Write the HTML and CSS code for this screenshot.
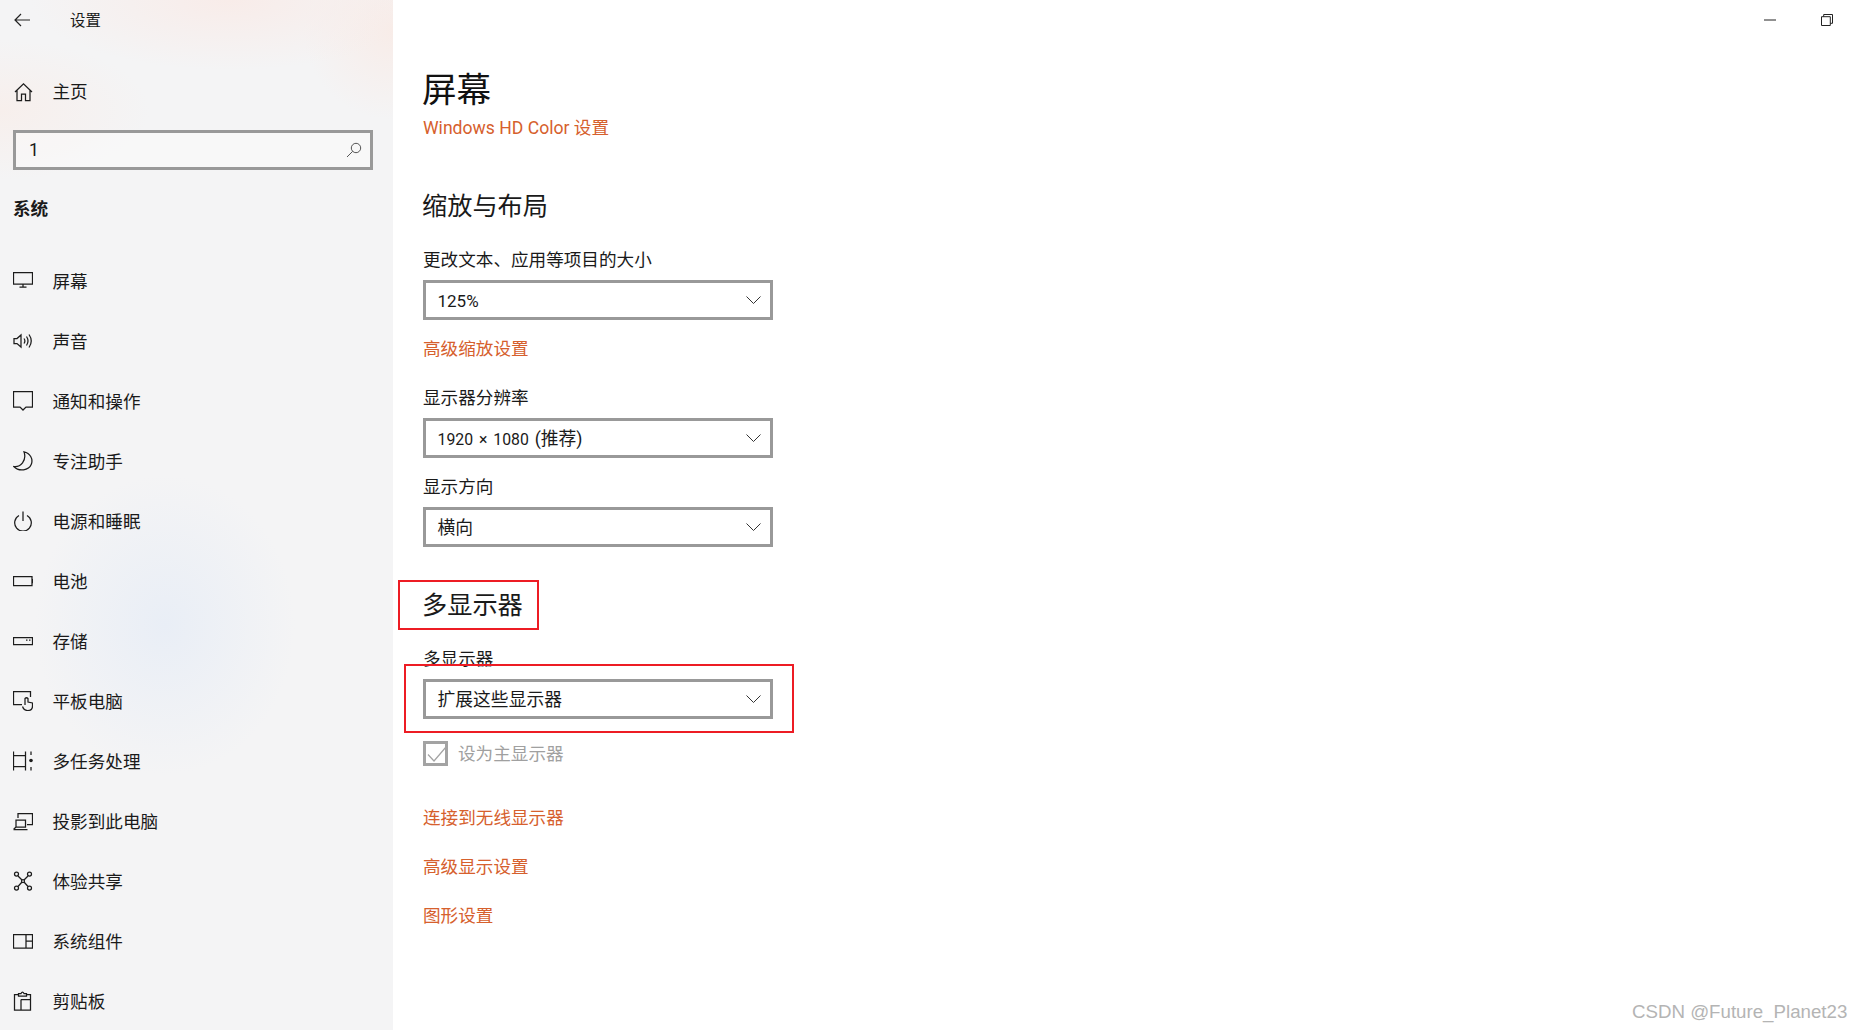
FILE: index.html
```html
<!DOCTYPE html>
<html lang="zh-CN">
<head>
<meta charset="utf-8">
<title>设置</title>
<link rel="stylesheet" href="styles.css">
</head>
<body>
<div class="app">
  <aside class="side">
    <div class="titlebar">
      <svg class="back" viewBox="0 0 16 14"><path d="M7 1 1 7l6 6M1 7h15"/></svg>
      <span class="app-name">设置</span>
    </div>
    <div class="row home">
      <svg class="ico" viewBox="0 0 20 20"><path d="M2 10 10.5 1.8 19 10M4 8.500V18.500H8.500V12H12.500V18.500H17V8.500"/></svg>
      <span>主页</span>
    </div>
    <div class="search">
      <span>1</span>
      <svg class="mag" viewBox="0 0 16 16"><circle cx="10" cy="6" r="4.700"/><path d="M6.700 9.300 1 15"/></svg>
    </div>
    <div class="group">系统</div>
    <nav class="nav">
      <div class="row"><svg class="ico" viewBox="0 0 20 20"><path d="M.5 1.500H19.500V13H.5ZM10 13V16M6.500 16H13.500"/></svg><span>屏幕</span></div>
      <div class="row"><svg class="ico" viewBox="0 0 20 20"><path d="M1 7.500H4L8 4V16L4 12.500H1ZM11 7.500Q12.800 10 11 12.500M13.500 5.500Q16.500 10 13.500 14.500M16 3.500Q20.500 10 16 16.500"/></svg><span>声音</span></div>
      <div class="row"><svg class="ico" viewBox="0 0 20 20"><path d="M.5 .5H19.500V16H13L10 19 7 16H.5Z"/></svg><span>通知和操作</span></div>
      <div class="row"><svg class="ico" viewBox="0 0 20 20"><path d="M11 .8C17 2 20.500 8 18.200 13.500 15.800 19.500 6 21 .8 15.500 7.500 16.500 14 9.500 11 .8Z"/></svg><span>专注助手</span></div>
      <div class="row"><svg class="ico" viewBox="0 0 20 20"><path d="M6 4.500A8.300 8.300 0 1 0 14 4.500M10 .5V10"/></svg><span>电源和睡眠</span></div>
      <div class="row"><svg class="ico" viewBox="0 0 20 20"><path d="M.5 5.500H19V14.500H.5ZM19 8.500H20V11.500H19"/></svg><span>电池</span></div>
      <div class="row"><svg class="ico" viewBox="0 0 20 20"><path d="M.5 6.500H19.500V13.500H.5ZM13 9H14.500M16 9H17.500"/></svg><span>存储</span></div>
      <div class="row"><svg class="ico" viewBox="0 0 20 20"><path d="M9 13.500H.5V.5H17.500V6M12 14V7.500Q13.500 6 15 7.500V11L19.500 12V15Q19.500 19.500 14.500 19.500 11 19.500 9.500 15.500"/></svg><span>平板电脑</span></div>
      <div class="row"><svg class="ico" viewBox="0 0 20 20"><path d="M.5 .5V4.500H12.500V.5M.5 19.500V15.500H12.500V19.500M.5 4.500V15.500M12.500 4.500V15.500M18 .5V4M18 16V19.500"/><circle class="dot" cx="18" cy="9.500" r="1.800"/></svg><span>多任务处理</span></div>
      <div class="row"><svg class="ico" viewBox="0 0 20 20"><path d="M5 7V2.500H19.500V13.500H14M3 9H12.500V16H3ZM.5 18.500H14.500M3 16 .5 18.500"/></svg><span>投影到此电脑</span></div>
      <div class="row"><svg class="ico" viewBox="0 0 20 20"><circle cx="3.500" cy="3" r="2"/><circle cx="16.500" cy="3" r="2"/><circle cx="3.500" cy="17" r="2"/><circle cx="16.500" cy="17" r="2"/><circle cx="10" cy="10" r="1.500"/><path d="M5 5 9 9M15 5 11 9M5 15.500 9 11M15 15.500 11 11"/></svg><span>体验共享</span></div>
      <div class="row"><svg class="ico" viewBox="0 0 20 20"><path d="M.5 3.500H19.500V17H.5ZM13 3.500V17M13 10H19.500"/></svg><span>系统组件</span></div>
      <div class="row"><svg class="ico" viewBox="0 0 20 20"><path d="M5.500 3.500H1.500V19H17.500V3.500H14M5.500 5V2.500H8Q9.500 -.5 11 2.500H13.500V5ZM8 8.500H17.500M8 8.500V19"/></svg><span>剪贴板</span></div>
    </nav>
  </aside>

  <main class="main">
    <div class="winctl">
      <svg class="min" viewBox="0 0 12 2"><path d="M0 1H12"/></svg>
      <svg class="restore" viewBox="0 0 12 12"><path d="M.5 2.700H9.300V11.500H.5ZM2.700 2.700V.5H11.500V9.300H9.300"/></svg>
    </div>
    <h1 class="title">屏幕</h1>
    <a class="link l-hd">Windows HD Color 设置</a>

    <h2 class="heading h-scale">缩放与布局</h2>
    <div class="label l-size">更改文本、应用等项目的大小</div>
    <div class="select s-size">
      <span class="val-num">125%</span>
      <svg class="chev" viewBox="0 0 15 8"><path d="M.5 .5 7.500 7.500 14.500 .5"/></svg>
    </div>
    <a class="link l-adv">高级缩放设置</a>

    <div class="label l-res">显示器分辨率</div>
    <div class="select s-res">
      <span class="val"><span class="num">1920 × 1080 </span>(推荐)</span>
      <svg class="chev" viewBox="0 0 15 8"><path d="M.5 .5 7.500 7.500 14.500 .5"/></svg>
    </div>
    <div class="label l-dir">显示方向</div>
    <div class="select s-first">
      <span class="val">横向</span>
      <svg class="chev" viewBox="0 0 15 8"><path d="M.5 .5 7.500 7.500 14.500 .5"/></svg>
    </div>

    <h2 class="heading h-multi">多显示器</h2>
    <div class="label l-multi">多显示器</div>
    <div class="select s-multi">
      <span class="val">扩展这些显示器</span>
      <svg class="chev" viewBox="0 0 15 8"><path d="M.5 .5 7.500 7.500 14.500 .5"/></svg>
    </div>
    <div class="check">
      <div class="box"><svg viewBox="0 0 25 25"><path d="M3 11.500 9 18 21 4"/></svg></div>
      <span>设为主显示器</span>
    </div>
    <a class="link l-wireless">连接到无线显示器</a>
    <a class="link l-more">高级显示设置</a>
    <a class="link l-more2">图形设置</a>
  </main>
</div>
<div class="mark mark-head"></div>
<div class="mark mark-select"></div>
<div class="watermark">CSDN @Future_Planet23</div>
</body>
</html>
```

FILE: styles.css
```css
* { box-sizing: border-box; }
html, body { margin: 0; height: 100%; }
body {
  width: 1862px;
  height: 1030px;
  overflow: hidden;
  position: relative;
  background: #fff;
  color: #1a1a1a;
  font-family: Roboto, "Noto Sans CJK SC", sans-serif;
  font-size: 17.6px;
}
.app { display: flex; height: 1030px; }

/* sidebar */
.side {
  width: 393px;
  flex: none;
  background:
    radial-gradient(ellipse 130px 150px at 165px 625px, #e9eef6 0%, rgba(233,238,246,0) 100%),
    radial-gradient(ellipse 200px 70px at 230px 0, #f8ece9 0%, rgba(248,236,233,0) 100%),
    radial-gradient(ellipse 90px 90px at 393px 30px, #f8ece8 0%, rgba(248,236,232,0) 100%),
    radial-gradient(ellipse 150px 70px at 0 110px, #f7efec 0%, rgba(247,239,236,0) 100%),
    #f4f4f5;
}
.titlebar { display: flex; align-items: center; height: 40px; padding-left: 15px; }
.back { width: 16px; height: 14px; fill: none; stroke: #222; stroke-width: 1.2; margin-left: -1px; margin-top: -1px; }
.app-name { margin-left: 40px; font-size: 15.4px; padding-bottom: 2px; }
.row { display: flex; align-items: center; height: 60px; padding-left: 13px; gap: 19.5px; }
.row span { padding-bottom: 1px; }
.home { margin-top: 22px; }
.home span { padding-bottom: 3px; }
.ico { width: 20px; height: 20px; flex: none; fill: none; stroke: #1c1c1c; stroke-width: 1.25; }
.ico .dot { fill: #1c1c1c; stroke: none; }
.search {
  display: flex; align-items: center; justify-content: space-between;
  width: 360px; height: 40px; margin: 8px 0 0 13px; padding: 0 8px 0 13px;
  border: 3px solid #999;
  background: rgba(255,255,255,.35);
}
.mag { width: 16px; height: 16px; fill: none; stroke: #555; stroke-width: 1; }
.group { height: 40px; line-height: 40px; margin: 19px 0 0 13px; font-weight: 700; }
.nav { margin-top: 22px; }

/* main */
.main { flex: 1; padding: 65px 0 0 30px; position: relative; }
.winctl {
  position: absolute; top: 0; right: 0; width: 98px; height: 40px;
  display: flex; align-items: center; justify-content: flex-start; gap: 45px;
}
.min { width: 12px; height: 2px; stroke: #222; stroke-width: 1; }
.restore { width: 12px; height: 12px; fill: none; stroke: #222; stroke-width: 1; margin-top: -1px; }
.title { margin: 0; font-size: 34.6px; font-weight: 400; line-height: 50px; color: #111; margin-left: -1px; }
.link { display: block; line-height: 24px; color: #d6602d; }
.l-hd { margin-top: 1px; }
.heading { margin: 0; font-size: 25.2px; font-weight: 400; line-height: 34px; margin-left: -1px; }
.h-scale { margin-top: 50px; }
.h-multi { margin-top: 42px; }
.label { line-height: 24px; }
.l-size { margin-top: 24px; }
.l-res { margin-top: 25px; }
.l-dir { margin-top: 17px; }
.l-multi { margin-top: 24px; }
.l-adv { margin-top: 17px; }
.select {
  display: flex; align-items: center; justify-content: space-between;
  width: 350px; height: 40px; padding: 0 9px 0 11.5px;
  border: 3px solid #999; background: #fff;
  font-size: 17.8px;
}
.val { padding-bottom: 2px; }
.val-num { font-size: 17px; padding-top: 2px; }
.num { font-size: 15.8px; word-spacing: 2px; }
.s-size { margin-top: 8px; }
.s-first { margin-top: 8px; }
.s-res { margin-top: 8px; }
.s-multi { margin-top: 8px; }
.chev { width: 15px; height: 8px; fill: none; stroke: #333; stroke-width: 1; }
.check { display: flex; align-items: center; gap: 10px; height: 25px; margin-top: 22px; color: #a0a0a0; }
.check span { padding-bottom: 2px; }
.box { width: 25px; height: 25px; border: 3px solid #a3a3a3; position: relative; }
.box svg { position: absolute; left: -1px; top: -1px; width: 25px; height: 25px; fill: none; stroke: #a3a3a3; stroke-width: 1.2; }
.l-wireless { margin-top: 40px; }
.l-more { margin-top: 25px; }
.l-more2 { margin-top: 25px; }

/* annotation overlays */
.mark { position: absolute; border: 2px solid #ed1c24; }
.mark-head { left: 398px; top: 580px; width: 141px; height: 50px; }
.mark-select { left: 404px; top: 664px; width: 390px; height: 69px; }
.watermark {
  position: absolute; left: 1632px; top: 1000px;
  font-family: "Liberation Sans", sans-serif; font-size: 18.7px; line-height: 24px;
  color: #b4b4b4; white-space: nowrap;
}
```
